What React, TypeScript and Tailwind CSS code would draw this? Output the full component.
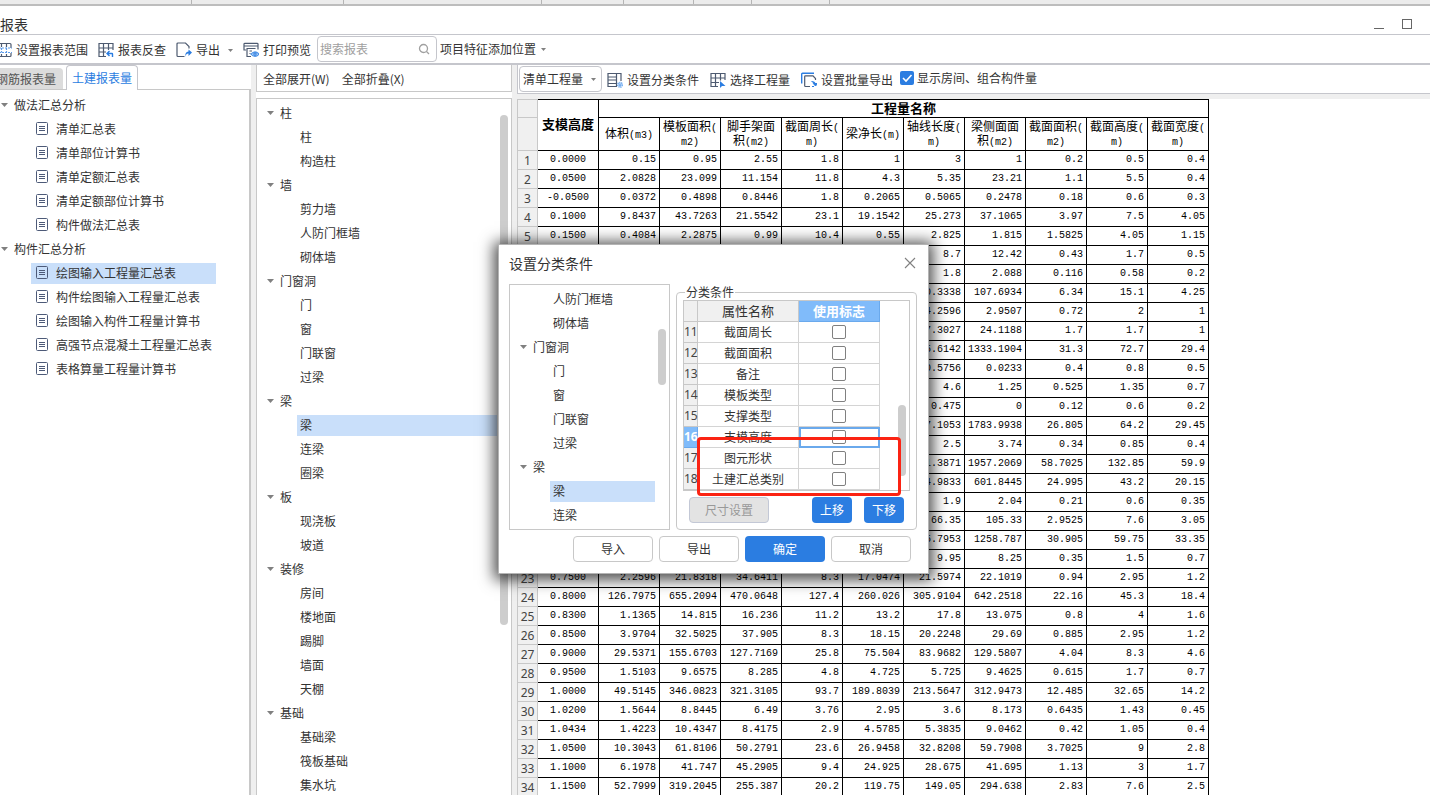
import type { ReactNode } from 'react';
import clsx from 'clsx';

type Row = [string, ...string[]];

const columns = [
  [['体积', '(m3)']],
  [['模板面积', '('], ['', 'm2)']],
  [['脚手架面', ''], ['积', '(m2)']],
  [['截面周长', '('], ['', 'm)']],
  [['梁净长', '(m)']],
  [['轴线长度', '('], ['', 'm)']],
  [['梁侧面面', ''], ['积', '(m2)']],
  [['截面面积', '('], ['', 'm2)']],
  [['截面高度', '('], ['', 'm)']],
  [['截面宽度', '('], ['', 'm)']],
];

const rows: Row[] = [
  ['0.0000', '0.15', '0.95', '2.55', '1.8', '1', '3', '1', '0.2', '0.5', '0.4'],
  ['0.0500', '2.0828', '23.099', '11.154', '11.8', '4.3', '5.35', '23.21', '1.1', '5.5', '0.4'],
  ['-0.0500', '0.0372', '0.4898', '0.8446', '1.8', '0.2065', '0.5065', '0.2478', '0.18', '0.6', '0.3'],
  ['0.1000', '9.8437', '43.7263', '21.5542', '23.1', '19.1542', '25.273', '37.1065', '3.97', '7.5', '4.05'],
  ['0.1500', '0.4084', '2.2875', '0.99', '10.4', '0.55', '2.825', '1.815', '1.5825', '4.05', '1.15'],
  ['', '', '', '', '', '', '8.7', '12.42', '0.43', '1.7', '0.5'],
  ['', '', '', '', '', '', '1.8', '2.088', '0.116', '0.58', '0.2'],
  ['', '', '', '', '', '', '0.3338', '107.6934', '6.34', '15.1', '4.25'],
  ['', '', '', '', '', '', '4.2596', '2.9507', '0.72', '2', '1'],
  ['', '', '', '', '', '', '7.3027', '24.1188', '1.7', '1.7', '1'],
  ['', '', '', '', '', '', '5.6142', '1333.1904', '31.3', '72.7', '29.4'],
  ['', '', '', '', '', '', '0.5756', '0.0233', '0.4', '0.8', '0.5'],
  ['', '', '', '', '', '', '4.6', '1.25', '0.525', '1.35', '0.7'],
  ['', '', '', '', '', '', '0.475', '0', '0.12', '0.6', '0.2'],
  ['', '', '', '', '', '', '7.1053', '1783.9938', '26.805', '64.2', '29.45'],
  ['', '', '', '', '', '', '2.5', '3.74', '0.34', '0.85', '0.4'],
  ['', '', '', '', '', '', '1.3871', '1957.2069', '58.7025', '132.85', '59.9'],
  ['', '', '', '', '', '', '4.9833', '601.8445', '24.995', '43.2', '20.15'],
  ['', '', '', '', '', '', '1.9', '2.04', '0.21', '0.6', '0.35'],
  ['', '', '', '', '', '', '66.35', '105.33', '2.9525', '7.6', '3.05'],
  ['', '', '', '', '', '', '5.7953', '1258.787', '30.905', '59.75', '33.35'],
  ['', '', '', '', '', '', '9.95', '8.25', '0.35', '1.5', '0.7'],
  ['0.7500', '2.2596', '21.8318', '34.6411', '8.3', '17.0474', '21.5974', '22.1019', '0.94', '2.95', '1.2'],
  ['0.8000', '126.7975', '655.2094', '470.0648', '127.4', '260.026', '305.9104', '642.2518', '22.16', '45.3', '18.4'],
  ['0.8300', '1.1365', '14.815', '16.236', '11.2', '13.2', '17.8', '13.075', '0.8', '4', '1.6'],
  ['0.8500', '3.9704', '32.5025', '37.905', '8.3', '18.15', '20.2248', '29.69', '0.885', '2.95', '1.2'],
  ['0.9000', '29.5371', '155.6703', '127.7169', '25.8', '75.504', '83.9682', '129.5807', '4.04', '8.3', '4.6'],
  ['0.9500', '1.5103', '9.6575', '8.285', '4.8', '4.725', '5.725', '9.4625', '0.615', '1.7', '0.7'],
  ['1.0000', '49.5145', '346.0823', '321.3105', '93.7', '189.8039', '213.5647', '312.9473', '12.485', '32.65', '14.2'],
  ['1.0200', '1.5644', '8.8445', '6.49', '3.76', '2.95', '3.6', '8.173', '0.6435', '1.43', '0.45'],
  ['1.0434', '1.4223', '10.4347', '8.4175', '2.9', '4.5785', '5.3835', '9.0462', '0.42', '1.05', '0.4'],
  ['1.0500', '10.3043', '61.8106', '50.2791', '23.6', '26.9458', '32.8208', '59.7908', '3.7025', '9', '2.8'],
  ['1.1000', '6.1978', '41.747', '45.2905', '9.4', '24.925', '28.675', '41.695', '1.13', '3', '1.7'],
  ['1.1500', '52.7999', '319.2045', '255.387', '20.2', '119.75', '149.05', '294.638', '2.83', '7.6', '2.5'],
];

const reportGroups = [
  { name: '做法汇总分析', items: ['清单汇总表', '清单部位计算书', '清单定额汇总表', '清单定额部位计算书', '构件做法汇总表'] },
  {
    name: '构件汇总分析',
    items: ['绘图输入工程量汇总表', '构件绘图输入工程量汇总表', '绘图输入构件工程量计算书', '高强节点混凝土工程量汇总表', '表格算量工程量计算书'],
  },
];

const memberGroups = [
  { name: '柱', items: ['柱', '构造柱'] },
  { name: '墙', items: ['剪力墙', '人防门框墙', '砌体墙'] },
  { name: '门窗洞', items: ['门', '窗', '门联窗', '过梁'] },
  { name: '梁', items: ['梁', '连梁', '圈梁'] },
  { name: '板', items: ['现浇板', '坡道'] },
  { name: '装修', items: ['房间', '楼地面', '踢脚', '墙面', '天棚'] },
  { name: '基础', items: ['基础梁', '筏板基础', '集水坑'] },
];

const dialogGroups = [
  { name: '', items: ['人防门框墙', '砌体墙'] },
  { name: '门窗洞', items: ['门', '窗', '门联窗', '过梁'] },
  { name: '梁', items: ['梁', '连梁'] },
];

const conditions = ['截面周长', '截面面积', '备注', '模板类型', '支撑类型', '支模高度', '图元形状', '土建汇总类别'];

const separators = [
  'w-[192px]',
  'w-[152px]',
  'w-[198px]',
  'w-[82px]',
  'w-[70px]',
  'w-[58px]',
  'w-[78px]',
];

function Caret({ className }: { className?: string }) {
  return (
    <svg viewBox="0 0 7 4" className={clsx('shrink-0 fill-[#808080]', className ?? 'h-1 w-[7px]')}>
      <path d="M0 0H7L3.5 4Z" />
    </svg>
  );
}

function Icon({ children }: { children: ReactNode }) {
  return (
    <svg viewBox="0 0 16 16" className="size-4 shrink-0" fill="none" stroke="#4d5a70" strokeWidth="1.2">
      {children}
    </svg>
  );
}

function RangeIcon() {
  return (
    <Icon>
      <path d="M1 6V2.5Q1 1.5 2 1.5H14Q15 1.5 15 2.5V6M1 11V13.5Q1 14.5 2 14.5H14Q15 14.5 15 13.5V11M5.5 1.5V5M10.5 1.5V5M5.5 12V14.5M10.5 12V14.5" />
      <path d="M0 6H16M0 10.5H16M5.5 6V10.5M10.5 6V10.5" stroke="#5b9bea" strokeDasharray="2 1" />
    </Icon>
  );
}

function CheckBackIcon() {
  return (
    <Icon>
      <path d="M15 8V1.5H1V14.5H8M1 6H15M1 10H8M5.5 1.5V14.5M10.5 1.5V8" />
      <path d="M14.5 15V12Q14.5 11.5 14 11.5H9.5M11.5 9L9 11.5L11.5 14" stroke="#2b7de1" strokeWidth="1.4" />
    </Icon>
  );
}

function ExportIcon() {
  return (
    <Icon>
      <path d="M13 5V4.5L9.5 1H2Q1 1 1 2V13.5Q1 14.5 2 14.5H8.5M13 5V6.5" />
      <path d="M9.5 15Q9.5 11.5 12.5 11.5V14L16 10.5L12.5 7.5V9.5Q8.5 10 9.5 15Z" fill="#2b7de1" stroke="none" />
    </Icon>
  );
}

function PrintIcon() {
  return (
    <Icon>
      <path d="M3 8H1V2Q1 1.3 2 1.3H14Q15 1.3 15 2V7.5M1 4H15M3.5 6.5H12.5M4 6.5V14.5H8M6.5 9H9M6.5 11.5H7.5" />
      <path d="M8 12.2Q12 7.5 16 12.2Q12 16.5 8 12.2Z" fill="#d9e9fc" stroke="#4c93e8" />
      <circle cx="12" cy="12.1" r="1.2" stroke="#2b7de1" />
    </Icon>
  );
}

function ClassifyIcon() {
  return (
    <Icon>
      <path d="M14 9V1.5H1V14.5H10M9.5 1.5V14.5M1 5H9.5M1 8H9.5M1 11.5H9.5" />
      <circle cx="13" cy="12.8" r="2.3" stroke="#74adf0" strokeWidth="1.6" strokeDasharray="1.2 .6" />
      <circle cx="13" cy="12.8" r="1" stroke="#74adf0" />
    </Icon>
  );
}

function PickIcon() {
  return (
    <Icon>
      <path d="M15 8V1.5H1V14.5H8M1 6H15M1 10.5H9M5.5 1.5V14.5M10.5 1.5V8.5" />
      <path d="M10 9V16L12 14H15.5Z" fill="#2b7de1" stroke="none" />
    </Icon>
  );
}

function BatchIcon() {
  return (
    <Icon>
      <path d="M13 1.2H1.5Q.7 1.2 .7 2V11.5" stroke="#2b7de1" strokeWidth="1.4" />
      <path d="M14.5 8V6.5L12 3.8H4.5Q3.7 3.8 3.7 4.6V13.7Q3.7 14.5 4.5 14.5H9" />
      <path d="M10.5 9.5Q14.5 9.5 14.5 12.5M12.3 11.5H16.7L14.5 14ZM13 14.5H11" fill="#2b7de1" stroke="#2b7de1" strokeWidth="1" />
    </Icon>
  );
}

function DocIcon() {
  return (
    <svg viewBox="0 0 12 13" className="h-[13px] w-3 shrink-0" fill="none" stroke="#4d5a78">
      <rect x=".5" y=".5" width="11" height="12" rx="1" />
      <path d="M3 4.5H9M3 6.5H9M3 8.5H9" />
    </svg>
  );
}

function ToolButton({ icon, children }: { icon: ReactNode; children: ReactNode }) {
  return (
    <button type="button" className="flex h-6 shrink-0 items-center gap-1 whitespace-nowrap">
      {icon}
      {children}
    </button>
  );
}

function MemberTree({ groups }: { groups: typeof memberGroups }) {
  return (
    <ul className="min-w-0 grow">
      {groups.map((group) => (
        <li key={group.name}>
          {group.name && (
            <div className="flex h-6 items-center gap-[6px] pl-[10px]">
              <Caret />
              {group.name}
            </div>
          )}
          <ul>
            {group.items.map((item) => (
              <li key={item} className="flex h-6 items-center pl-10">
                <span className={clsx('h-[21px] grow pl-[3px] leading-[19px]', group.name === '梁' && item === '梁' && 'bg-[#c9dffa]')}>
                  {item}
                </span>
              </li>
            ))}
          </ul>
        </li>
      ))}
    </ul>
  );
}

function TopBar() {
  return (
    <header className="shrink-0">
      <div className="flex h-[6px] border-b-2 border-[#bdbdbd] bg-[#ececec]">
        {separators.map((width) => (
          <div key={width} className={clsx('border-r border-[#b5b5b5]', width)} />
        ))}
      </div>
      <div className="flex h-[29px] items-center justify-between border-b border-[#c5c6cc] pt-2 pr-[18px]">
        <h1 className="text-sm">报表</h1>
        <div className="flex items-center gap-4">
          <button type="button" aria-label="最小化" className="flex h-4 w-3 items-end pb-[3px]">
            <span className="h-px w-[10px] bg-[#666]" />
          </button>
          <button type="button" aria-label="最大化" className="size-[10px] border border-[#666]" />
        </div>
      </div>
      <nav className="flex h-[30px] items-center border-b-2 border-[#c5c6cc]">
        <div className="-ml-1 flex items-center gap-[10px] pt-[2px]">
          <ToolButton icon={<RangeIcon />}>设置报表范围</ToolButton>
          <ToolButton icon={<CheckBackIcon />}>报表反查</ToolButton>
          <ToolButton icon={<ExportIcon />}>
            导出
            <Caret className="ml-1 h-[3px] w-[5px]" />
          </ToolButton>
          <ToolButton icon={<PrintIcon />}>打印预览</ToolButton>
        </div>
        <label className="ml-[6px] flex h-[26px] w-[120px] items-center rounded-sm border border-[#c5c6cc] px-[2px]">
          <input type="text" aria-label="搜索报表" placeholder="搜索报表" className="w-full min-w-0 outline-none placeholder:text-[#a0a0a0]" />
          <svg viewBox="0 0 12 12" className="mr-1 size-3 shrink-0" fill="none" stroke="#a0a0a0" strokeWidth="1.3">
            <circle cx="5.5" cy="5.5" r="4" />
            <path d="M8.5 8.5L11 11" />
          </svg>
        </label>
        <label className="ml-[3px] flex items-center gap-1">
          <select aria-label="项目特征添加位置" className="appearance-none">
            <option>项目特征添加位置</option>
          </select>
          <Caret className="h-[3px] w-[5px]" />
        </label>
      </nav>
    </header>
  );
}

function ReportPanel() {
  return (
    <aside className="flex w-[251px] shrink-0 flex-col">
      <div className="flex h-6 shrink-0 items-end gap-[3px]">
        <button type="button" className="flex h-[21px] w-[63px] items-center justify-end rounded-tr-sm bg-[#dcdcdc] pr-[7px] whitespace-nowrap text-[#555]">
          钢筋报表量
        </button>
        <button type="button" className="z-10 -mb-px h-[25px] w-[72px] rounded-t-sm border border-b-0 border-[#c5c6cc] bg-white text-[#2b7de1]">
          土建报表量
        </button>
      </div>
      <div className="grow border-t border-r-2 border-[#c8c8c8] pt-[3px]">
        {reportGroups.map((group) => (
          <div key={group.name}>
            <div className="flex h-6 items-center gap-[6px] pl-px">
              <Caret />
              {group.name}
            </div>
            <ul>
              {group.items.map((item) => (
                <li key={item} className="flex h-6 items-center pl-[31px]">
                  <a
                    href="#"
                    className={clsx('flex h-[21px] w-[185px] items-center gap-2 pb-px pl-[5px] whitespace-nowrap', item === '绘图输入工程量汇总表' && 'bg-[#c9dffa]')}
                  >
                    <DocIcon />
                    {item}
                  </a>
                </li>
              ))}
            </ul>
          </div>
        ))}
      </div>
    </aside>
  );
}

function MemberPanel() {
  return (
    <aside className="flex w-64 shrink-0 flex-col">
      <div className="flex h-[27px] shrink-0 items-center gap-3 border border-t-0 border-[#c8c8c8] pt-[2px] pl-[6px]">
        <button type="button">全部展开(W)</button>
        <button type="button">全部折叠(X)</button>
      </div>
      <div className="mt-[6px] flex min-h-0 grow overflow-hidden border border-b-0 border-[#c8c8c8] pt-[2px]">
        <MemberTree groups={memberGroups} />
        <div className="mt-[14px] mr-[3px] ml-[3px] h-[510px] w-2 shrink-0 rounded-full bg-[#cdcdcd]" />
      </div>
    </aside>
  );
}

function QuantityTable() {
  return (
    <table className="w-[692px] table-fixed border-separate border-spacing-0 bg-white text-black">
      <colgroup>
        <col className="w-[21px]" />
        {[0, ...columns].map((_, i) => (
          <col key={i} className="w-[61px]" />
        ))}
      </colgroup>
      <thead>
        <tr className="h-[19px]">
          <td className="border border-[#c8c8c8] bg-[#f0f0f0] p-0" />
          <th rowSpan={2} className="border-y border-r border-black p-0 pb-[2px] text-[13px] leading-4">
            支模高度
          </th>
          <th colSpan={10} className="border-y border-r border-black p-0 pb-[2px] text-[13px] leading-[15px]">
            工程量名称
          </th>
        </tr>
        <tr className="h-[33px]">
          <td className="border border-t-0 border-[#c8c8c8] bg-[#f0f0f0] p-0" />
          {columns.map((lines, i) => (
            <th key={i} className="border-r border-b border-black p-0 pb-[2px] font-normal whitespace-nowrap leading-[14px]">
              {lines.map(([label, unit]) => (
                <div key={label + unit} className="h-[14px]">
                  {label}
                  <span className="font-['Liberation_Mono'] text-[10px]">{unit}</span>
                </div>
              ))}
            </th>
          ))}
        </tr>
      </thead>
      <tbody>
        {rows.map(([height, ...values], i) => (
          <tr key={i} className="h-[19px]">
            <th className="border border-t-0 border-[#c8c8c8] bg-[#f0f0f0] p-0 pt-[2px] font-['Noto_Sans'] font-normal leading-4 text-[#444]">
              {i + 1}
            </th>
            <td className="border-r border-b border-black p-0 text-center font-['Liberation_Mono'] text-[10px] leading-4">{height}</td>
            {values.map((value, j) => (
              <td key={j} className="border-r border-b border-black p-0 pr-[3px] text-right font-['Liberation_Mono'] text-[10px] leading-4">
                {value}
              </td>
            ))}
          </tr>
        ))}
      </tbody>
    </table>
  );
}

function ReportView() {
  return (
    <main className="flex min-w-0 grow flex-col">
      <div className="flex h-[29px] shrink-0 items-center border-b border-l border-[#c5c6cc] pl-px">
        <label className="relative flex h-[26px] w-[83px] items-center rounded-sm border border-[#c5c6cc]">
          <select aria-label="报表类型" className="h-full w-full appearance-none pl-[3px]">
            <option>清单工程量</option>
          </select>
          <Caret className="absolute right-[5px] h-[3px] w-[5px]" />
        </label>
        <div className="ml-[5px] flex items-center gap-[11px] pt-[2px]">
          <ToolButton icon={<ClassifyIcon />}>设置分类条件</ToolButton>
          <ToolButton icon={<PickIcon />}>选择工程量</ToolButton>
          <ToolButton icon={<BatchIcon />}>设置批量导出</ToolButton>
        </div>
        <label className="ml-[7px] flex items-center gap-[3px] pb-[2px]">
          <span className="relative flex">
            <input type="checkbox" defaultChecked className="size-[14px] appearance-none rounded-xs bg-[#2b7de1]" />
            <svg viewBox="0 0 14 14" className="pointer-events-none absolute size-[14px]" fill="none" stroke="#fff" strokeWidth="1.6">
              <path d="M3 7L6 10L11.5 4" />
            </svg>
          </span>
          显示房间、组合构件量
        </label>
      </div>
      <div className="h-[5px] shrink-0 bg-[#efefef]" />
      <div className="min-h-0 grow overflow-hidden">
        <QuantityTable />
      </div>
    </main>
  );
}

function ConditionTable() {
  return (
    <div className="flex h-[191px] justify-between border border-[#c8c8c8]">
      <table className="w-[196px] table-fixed border-separate border-spacing-0 text-center">
        <colgroup>
          <col className="w-[14px]" />
          <col className="w-[101px]" />
          <col className="w-[81px]" />
        </colgroup>
        <thead>
          <tr className="h-[21px] text-[13px] leading-5">
            <td className="border-r border-b border-[#c8c8c8] bg-[#f0f0f0] p-0" />
            <th className="border-r border-b border-[#c8c8c8] bg-[#f0f0f0] p-0 font-normal">属性名称</th>
            <th className="border-r border-b border-[#6aa9ec] bg-[#80bbfa] p-0 font-bold text-white">使用标志</th>
          </tr>
        </thead>
        <tbody>
          {conditions.map((name, i) => {
            const active = name === '支模高度';
            return (
              <tr key={name} className="h-[21px] leading-5">
                <th
                  className={clsx(
                    "border-r border-b p-0 font-['Noto_Sans']",
                    active ? 'border-[#6aa9ec] bg-[#80bbfa] font-bold text-white' : 'border-[#c8c8c8] bg-[#f0f0f0] font-normal text-[#444]',
                  )}
                >
                  {i + 11}
                </th>
                <td className="border-r border-b border-[#d4d4d4] p-0">{name}</td>
                <td className={clsx('border-r border-b border-[#d4d4d4] p-0', active && 'outline-2 -outline-offset-2 outline-[#6aa9ec]')}>
                  <input
                    type="checkbox"
                    aria-label={name}
                    className="mx-auto block size-[14px] appearance-none rounded-xs border border-[#808080] bg-white"
                  />
                </td>
              </tr>
            );
          })}
        </tbody>
      </table>
      <div className="mt-[104px] mr-[3px] h-[71px] w-2 rounded-full bg-[#cdcdcd]" />
    </div>
  );
}

function ClassifyDialog() {
  const plain = 'h-[26px] w-20 rounded-sm border border-[#c8c8c8] bg-white';
  return (
    <section
      role="dialog"
      aria-labelledby="dialog-title"
      className="absolute top-[244px] left-[498px] z-20 w-[431px] border border-[#b4b4b4] bg-white pb-[11px] shadow-[0_2px_14px_4px_rgba(0,0,0,0.7)]"
    >
      <div className="flex h-[39px] items-center justify-between pr-3 pb-[3px] pl-[10px]">
        <h2 id="dialog-title" className="text-sm">
          设置分类条件
        </h2>
        <button type="button" aria-label="关闭">
          <svg viewBox="0 0 12 12" className="size-3" fill="none" stroke="#808080" strokeWidth="1.1">
            <path d="M1 1L11 11M11 1L1 11" />
          </svg>
        </button>
      </div>
      <div className="flex gap-[6px] pr-[11px] pl-[10px]">
        <div className="flex h-[246px] w-[161px] overflow-hidden border border-[#c8c8c8] pt-[2px]">
          <MemberTree groups={dialogGroups} />
          <div className="mt-[42px] mr-[3px] ml-[3px] h-14 w-2 shrink-0 rounded-full bg-[#cdcdcd]" />
        </div>
        <fieldset className="relative h-[246px] min-w-0 grow rounded-sm border border-[#c8c8c8] px-[6px]">
          <legend className="ml-[2px] px-px leading-4">分类条件</legend>
          <ConditionTable />
          <div className="mt-[6px] flex gap-3 px-[6px]">
            <button type="button" disabled className="mr-auto h-[26px] w-20 rounded-sm border border-[#c3c8d6] bg-[#e3e3e3] text-[#999]">
              尺寸设置
            </button>
            <button type="button" className="h-[26px] w-10 rounded-sm bg-[#2b7de1] text-white">
              上移
            </button>
            <button type="button" className="h-[26px] w-10 rounded-sm bg-[#2b7de1] text-white">
              下移
            </button>
          </div>
          {/* red marker over the last conditions */}
          <div className="pointer-events-none absolute top-[137px] left-5 h-[59px] w-[204px] rounded-sm border-3 border-[#fb2313]" />
        </fieldset>
      </div>
      <div className="mt-[6px] flex justify-end gap-[6px] pr-[17px]">
        <button type="button" className={plain}>导入</button>
        <button type="button" className={plain}>导出</button>
        <button type="button" className="h-[26px] w-20 rounded-sm bg-[#2b7de1] text-white">确定</button>
        <button type="button" className={plain}>取消</button>
      </div>
    </section>
  );
}

export default function App() {
  return (
    <div className="relative flex h-screen flex-col overflow-hidden bg-white font-['Noto_Sans_CJK_SC',sans-serif] text-xs text-[#333]">
      <TopBar />
      <div className="flex min-h-0 grow">
        <ReportPanel />
        <div className="w-[5px] shrink-0 bg-[#efefef]" />
        <MemberPanel />
        <div className="w-[5px] shrink-0 bg-[#efefef]" />
        <ReportView />
      </div>
      <ClassifyDialog />
    </div>
  );
}
